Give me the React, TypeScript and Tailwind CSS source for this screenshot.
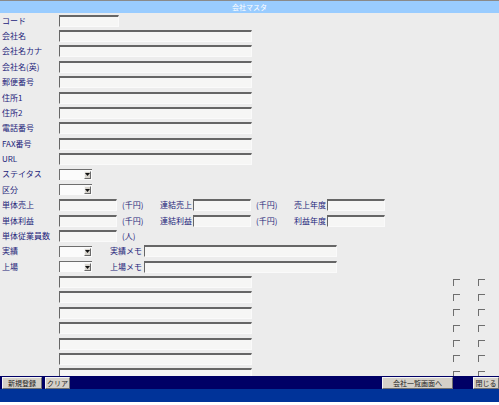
import type { ReactNode } from "react";

const ROW = "flex h-[15.375px] shrink-0 items-center";

function Label({ children, w = "w-[59px]" }: { children?: ReactNode; w?: string }) {
  return (
    <span className={`${w} shrink-0 whitespace-nowrap pl-[2px] text-[8px] leading-none text-[#1c1c7a]`}>
      {children}
    </span>
  );
}

function TextBox({ w }: { w: string }) {
  return (
    <span
      className={`${w} block h-[12px] shrink-0 border-t-2 border-l border-b border-r border-t-[#666] border-l-[#666] border-b-[#fafafa] border-r-[#fafafa] bg-[#f6f6f5]`}
    />
  );
}

function SelectBox() {
  return (
    <span className="flex h-[11px] w-[33px] shrink-0 items-stretch border-t border-l border-[#6e6e6e] bg-[#fbfbfb]">
      <span className="flex-1" />
      <span className="mr-[1px] my-[1px] flex w-[7px] items-center justify-center border-t border-l border-[#f4f4f4] border-b border-r border-b-[#6a6a6a] border-r-[#6a6a6a] bg-[#d6d3cc]">
        <svg width="5" height="3" viewBox="0 0 5 3" aria-hidden="true">
          <path d="M0 0h5L2.5 3z" fill="#111" />
        </svg>
      </span>
    </span>
  );
}

function Check({ className = "" }: { className?: string }) {
  return <span className={`block h-[7px] w-[7px] shrink-0 border-t border-l border-[#6e6e6e] ${className}`} />;
}

function FooterButton({ children, w }: { children: ReactNode; w: string }) {
  return (
    <span
      className={`${w} flex h-[12px] shrink-0 items-center justify-center border-t border-l border-[#f4f4f4] border-b border-r border-b-[#707070] border-r-[#707070] bg-[#d4d0c8] text-[7px] leading-none text-[#222]`}
    >
      {children}
    </span>
  );
}

const basicRows = [
  { label: "コード", w: "w-[60px]" },
  { label: "会社名", w: "w-[193px]" },
  { label: "会社名カナ", w: "w-[193px]" },
  { label: "会社名(英)", w: "w-[193px]" },
  { label: "郵便番号", w: "w-[193px]" },
  { label: "住所1", w: "w-[193px]" },
  { label: "住所2", w: "w-[193px]" },
  { label: "電話番号", w: "w-[193px]" },
  { label: "FAX番号", w: "w-[193px]" },
  { label: "URL", w: "w-[193px]" },
];

export default function App() {
  return (
    <div className="flex h-[405px] w-[499px] flex-col overflow-hidden bg-[#ececec] font-['Noto_Sans_CJK_JP',sans-serif]">
      {/* title bar */}
      <div className="flex h-[13px] shrink-0 items-center justify-center border-t border-[#8a8a8a] bg-[#99ccff] text-[7px] leading-none text-white">
        会社マスタ
      </div>

      {/* form body */}
      <div className="flex flex-1 flex-col overflow-hidden">
        {basicRows.map((r) => (
          <div key={r.label} className={ROW}>
            <Label>{r.label}</Label>
            <TextBox w={r.w} />
          </div>
        ))}

        <div className={ROW}>
          <Label>ステイタス</Label>
          <SelectBox />
        </div>
        <div className={ROW}>
          <Label>区分</Label>
          <SelectBox />
        </div>

        <div className={ROW}>
          <Label>単体売上</Label>
          <TextBox w="w-[58px]" />
          <Label w="w-[41px] pl-[5px]">(千円)</Label>
          <Label w="w-[35px] pl-0">連結売上</Label>
          <TextBox w="w-[58px]" />
          <Label w="w-[41px] pl-[5px]">(千円)</Label>
          <Label w="w-[35px] pl-0">売上年度</Label>
          <TextBox w="w-[58px]" />
        </div>
        <div className={ROW}>
          <Label>単体利益</Label>
          <TextBox w="w-[58px]" />
          <Label w="w-[41px] pl-[5px]">(千円)</Label>
          <Label w="w-[35px] pl-0">連結利益</Label>
          <TextBox w="w-[58px]" />
          <Label w="w-[41px] pl-[5px]">(千円)</Label>
          <Label w="w-[35px] pl-0">利益年度</Label>
          <TextBox w="w-[58px]" />
        </div>
        <div className={ROW}>
          <Label>単体従業員数</Label>
          <TextBox w="w-[58px]" />
          <Label w="w-[41px] pl-[5px]">(人)</Label>
        </div>

        <div className={ROW}>
          <Label>実績</Label>
          <SelectBox />
          <Label w="w-[52px] pl-[18px]">実績メモ</Label>
          <TextBox w="w-[193px]" />
        </div>
        <div className={ROW}>
          <Label>上場</Label>
          <SelectBox />
          <Label w="w-[52px] pl-[18px]">上場メモ</Label>
          <TextBox w="w-[193px]" />
        </div>

        {Array.from({ length: 7 }).map((_, i) => (
          <div key={i} className={ROW}>
            <Label />
            <TextBox w="w-[193px]" />
            <Check className="ml-[201px]" />
            <Check className="ml-[18px]" />
          </div>
        ))}
      </div>

      {/* footer */}
      <div className="flex h-[13px] shrink-0 items-end bg-[#000066] pl-[2px]">
        <FooterButton w="w-[40px]">新規登録</FooterButton>
        <span className="ml-[3px]" />
        <FooterButton w="w-[25px]">クリア</FooterButton>
        <span className="ml-[312px]" />
        <FooterButton w="w-[71px]">会社一覧画面へ</FooterButton>
        <span className="ml-[20px]" />
        <FooterButton w="w-[26px]">閉じる</FooterButton>
      </div>
      <div className="h-[13px] shrink-0 bg-[#003399]" />
      <div className="h-[3px] shrink-0 bg-white" />
    </div>
  );
}
